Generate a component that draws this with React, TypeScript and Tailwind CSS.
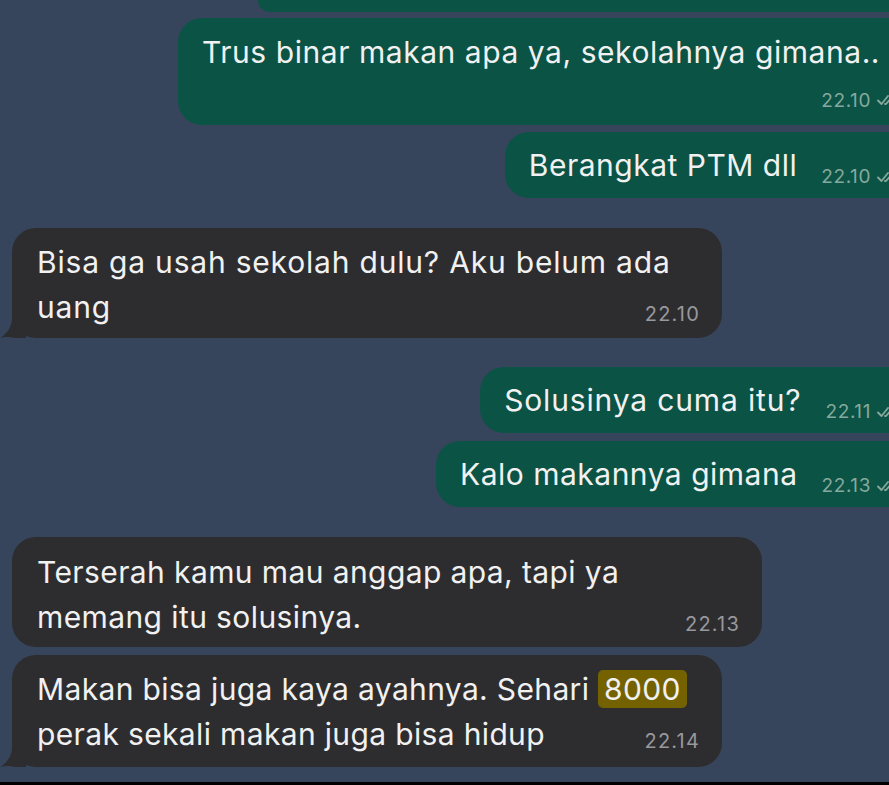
import React from 'react'

const FONT = { fontFamily: 'Inter, "Noto Sans", sans-serif' }

function Checks() {
  return (
    <svg width="20" height="14" viewBox="0 0 20 14" className="shrink-0" fill="none" stroke="#86a99e" strokeWidth="1.8" strokeLinecap="round" strokeLinejoin="round">
      <path d="M1 7.5l3.5 3.5L11 3" />
      <path d="M8 11l1 0L16 3" />
    </svg>
  )
}

function Tail() {
  return (
    <svg width="26" height="24" viewBox="0 0 26 24" className="absolute -left-[12px] bottom-0" fill="#2d2d30">
      <path d="M12 0 L26 0 L26 24 L14 24 C10 22.5 6 23 0.5 24 C6 20 12 14 12 4 Z" />
    </svg>
  )
}

function Out({ text, time, track = 'tracking-[0.5px]' }: { text: string; time: string; track?: string }) {
  return (
    <div className="self-end -mr-[40px] rounded-[24px] bg-[#0b5345] pl-6 pr-[32px] pt-[11px] pb-[10px] flex items-end gap-6">
      <span className={`text-[30px] leading-[45px] ${track} text-[#f1f1f1] whitespace-nowrap`}>{text}</span>
      <span className="flex items-center gap-[6px] pb-[2px]">
        <span className="text-[19px] leading-none tracking-[0.6px] text-[#86a99e]">{time}</span>
        <Checks />
      </span>
    </div>
  )
}

function In({ lines, time, width, tail, pt, pb, track }: { lines: React.ReactNode[]; time: string; width: string; tail?: boolean; pt: string; pb: string; track: string }) {
  return (
    <div className={`relative ml-[12px] ${width} rounded-[24px] bg-[#2d2d30] pl-[25px] pr-[22px] ${pt} ${pb} text-[30px] leading-[45px] ${track} text-[#f1f1f1]`}>
      {tail && <Tail />}
      <div className="whitespace-nowrap">{lines[0]}</div>
      <div className="flex justify-between items-end whitespace-nowrap">
        <span>{lines[1]}</span>
        <span className="text-[20px] leading-none tracking-[1.2px] text-[#98989d] pb-[6px]">{time}</span>
      </div>
    </div>
  )
}

export default function App() {
  return (
    <div className="w-[889px] h-[785px] overflow-hidden bg-[#37455c] flex flex-col" style={FONT}>
      {/* previous message, cut at top */}
      <div className="h-[12px] ml-[258px] -mr-[40px] rounded-b-[24px] bg-[#0b5345]" />

      <div className="mt-[6px] ml-[178px] -mr-[40px] rounded-[24px] bg-[#0b5345] pl-6 pr-[32px] pt-[12px] pb-[14px]">
        <div className="text-[30px] leading-[45px] tracking-[0.55px] text-[#f1f1f1] whitespace-nowrap">Trus binar makan apa ya, sekolahnya gimana..</div>
        <div className="mt-[14px] h-[22px] flex justify-end items-center gap-[6px]">
          <span className="text-[19px] leading-none tracking-[0.6px] text-[#86a99e]">22.10</span>
          <Checks />
        </div>
      </div>

      <div className="mt-[7px] flex flex-col">
        <Out text="Berangkat PTM dll" time="22.10" />
      </div>

      <div className="mt-[30px]">
        <In lines={['Bisa ga usah sekolah dulu? Aku belum ada', 'uang']} time="22.10" width="w-[710px]" tail pt="pt-[12px]" pb="pb-[8px]" track="tracking-[0.8px]" />
      </div>

      <div className="mt-[29px] flex flex-col">
        <Out text="Solusinya cuma itu?" time="22.11" track="tracking-[0.85px]" />
      </div>
      <div className="mt-[8px] flex flex-col">
        <Out text="Kalo makannya gimana" time="22.13" />
      </div>

      <div className="mt-[30px]">
        <In lines={['Terserah kamu mau anggap apa, tapi ya', 'memang itu solusinya.']} time="22.13" width="w-[750px]" pt="pt-[13px]" pb="pb-[7px]" track="tracking-[0.4px]" />
      </div>

      <div className="mt-[8px]">
        <In
          lines={[
            <>Makan bisa juga kaya ayahnya. Sehari <span className="inline-block rounded-[5px] bg-[#746200] px-[6px] leading-[38px]">8000</span></>,
            'perak sekali makan juga bisa hidup',
          ]}
          time="22.14"
          width="w-[710px]"
          tail
          pt="pt-[12px]"
          pb="pb-[10px]"
          track="tracking-[0.35px]"
        />
      </div>

      <div className="mt-auto h-[3px] bg-black" />
    </div>
  )
}
